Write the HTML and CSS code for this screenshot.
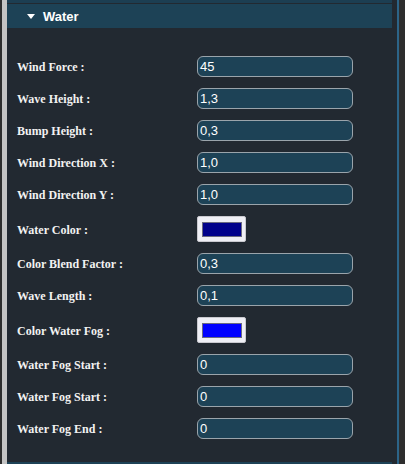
FILE: index.html
```html
<!DOCTYPE html>
<html>
<head>
<meta charset="utf-8">
<link rel="stylesheet" href="styles.css">
</head>
<body>
<div class="frame">
  <div class="panel">
    <div class="prev-header"></div>
    <div class="header">
      <span class="caret"></span>
      <span class="title">Water</span>
    </div>
    <div class="fields">
      <label class="lbl">Wind Force :</label><div class="inp">45</div>
      <label class="lbl">Wave Height :</label><div class="inp">1,3</div>
      <label class="lbl">Bump Height :</label><div class="inp">0,3</div>
      <label class="lbl">Wind Direction X :</label><div class="inp">1,0</div>
      <label class="lbl">Wind Direction Y :</label><div class="inp">1,0</div>
      <label class="lbl">Water Color :</label><div class="color"><span class="swatch dark"></span></div>
      <label class="lbl">Color Blend Factor :</label><div class="inp">0,3</div>
      <label class="lbl">Wave Length :</label><div class="inp">0,1</div>
      <label class="lbl">Color Water Fog :</label><div class="color"><span class="swatch blue"></span></div>
      <label class="lbl">Water Fog Start :</label><div class="inp">0</div>
      <label class="lbl">Water Fog Start :</label><div class="inp">0</div>
      <label class="lbl">Water Fog End :</label><div class="inp">0</div>
    </div>
    <div class="next-header"></div>
  </div>
</div>
</body>
</html>
```
FILE: styles.css
```css
html, body {
  margin: 0;
  padding: 0;
}
body {
  background: #2e2e2e;
  width: 405px;
  height: 464px;
  overflow: hidden;
}
.frame {
  margin-left: 2px;
  border-left: 5px solid #c4c4c4;
  height: 464px;
  box-sizing: border-box;
  display: flex;
}
.panel {
  width: 390px;
  background: #222931;
  border-right: 2px solid #2c6488;
  display: flex;
  flex-direction: column;
}
.prev-header {
  width: 385px;
  height: 3px;
  background: #1c3e52;
  margin-bottom: 1px;
  flex: none;
}
.header {
  width: 385px;
  height: 24px;
  flex: none;
  background: #1d4256;
  display: flex;
  align-items: center;
  box-sizing: border-box;
  padding-left: 20px;
}
.caret {
  width: 0;
  height: 0;
  border-left: 4px solid transparent;
  border-right: 4px solid transparent;
  border-top: 5px solid #ffffff;
  margin-right: 8px;
  margin-top: 1px;
}
.title {
  font-family: "Liberation Sans", Arial, sans-serif;
  font-weight: bold;
  font-size: 13px;
  color: #ffffff;
}
.fields {
  display: grid;
  grid-template-columns: 180px 156px;
  row-gap: 11px;
  padding: 28px 0 0 10px;
  height: 434px;
  flex: none;
  box-sizing: border-box;
  align-content: start;
  align-items: center;
}
.lbl {
  font-family: "Liberation Serif", "Times New Roman", serif;
  font-weight: bold;
  font-size: 12px;
  color: #f2f2f2;
  padding-top: 2px;
}
.inp {
  height: 21px;
  box-sizing: border-box;
  border: 1px solid #9aa4ab;
  border-radius: 6px;
  background: #1d4256;
  color: #ffffff;
  font-family: "Liberation Sans", Arial, sans-serif;
  font-size: 13px;
  line-height: 19px;
  padding-left: 2px;
}
.color {
  width: 49px;
  height: 26px;
  box-sizing: border-box;
  background: #efeff5;
  border: 1px solid #c9c9cf;
  border-radius: 2px;
  padding: 5px 3px 4px 4px;
  display: flex;
}
.swatch {
  flex: 1;
  border: 1px solid #6a6a80;
}
.swatch.dark {
  background: #00008b;
}
.swatch.blue {
  background: #0000ff;
}
.next-header {
  width: 385px;
  height: 3px;
  flex: none;
  background: #1d4256;
}
```
